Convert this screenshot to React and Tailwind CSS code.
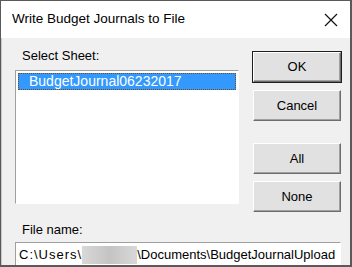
export default function App() {
  const btn =
    "flex h-[30px] w-[88px] items-center justify-center bg-[#e1e1e1] text-[13px] text-black border border-t-white border-l-white border-r-[#6d6d6d] border-b-[#6d6d6d] shadow-[inset_-1px_-1px_0_#a0a0a0]";

  return (
    <div
      className="flex h-[267px] w-[352px] flex-col overflow-hidden border border-[#5a5a5a] border-r-2 border-b-2 bg-[#f0f0f0]"
      style={{ fontFamily: '"Liberation Sans", Arial, sans-serif' }}
    >
      {/* title bar */}
      <div className="flex h-[37px] shrink-0 items-center justify-between bg-white pl-[11px] pr-[10px]">
        <span className="text-[13.5px] text-black">Write Budget Journals to File</span>
        <svg width="16" height="16" viewBox="0 0 16 16" className="mr-[1px]">
          <path d="M2 2 L14 14 M14 2 L2 14" stroke="#111" strokeWidth="1.2" fill="none" />
        </svg>
      </div>

      <div className="flex flex-1 flex-col border-l border-[#c8c8c8] px-[13px]">
        <div className="flex gap-[14px]">
          {/* left column */}
          <div className="flex flex-col pt-[10px]">
            <span className="pl-[7px] text-[13px] leading-[16px] text-black">Select Sheet:</span>
            <div className="mt-[6px] h-[134px] w-[224px] border border-t-[#a0a0a0] border-l-[#a0a0a0] border-r-white border-b-white bg-white p-[2px]">
              <div className="flex h-[17px] items-center border border-dotted border-[#7a4a10] bg-[#3399ff] pl-[10px] text-[14px] text-white">
                BudgetJournal06232017
              </div>
            </div>
          </div>

          {/* right buttons */}
          <div className="flex flex-col pt-[14px]">
            <button className={btn + " outline outline-1 outline-[#1e1e1e]"}>OK</button>
            <button className={btn + " mt-[8px] h-[31px]"}>Cancel</button>
            <button className={btn + " mt-[22px] h-[31px]"}>All</button>
            <button className={btn + " mt-[7px] h-[31px]"}>None</button>
          </div>
        </div>

        <span className="mt-[10px] pl-[7px] text-[13px] leading-[16px] text-black">File name:</span>
        <div className="mt-[4px] flex h-[26px] w-[326px] shrink-0 items-center border border-t-[#a0a0a0] border-l-[#a0a0a0] border-r-white border-b-white bg-white pl-[3px] text-[13px] text-black whitespace-nowrap">
          <span className="tracking-[1px]">C:\Users\</span>
          <span className="h-[18px] w-[55px] bg-gradient-to-r from-[#d8d8d8] via-[#c4c4c4] to-[#d8d8d8]" />
          <span>\Documents\BudgetJournalUpload</span>
        </div>
      </div>
    </div>
  );
}
